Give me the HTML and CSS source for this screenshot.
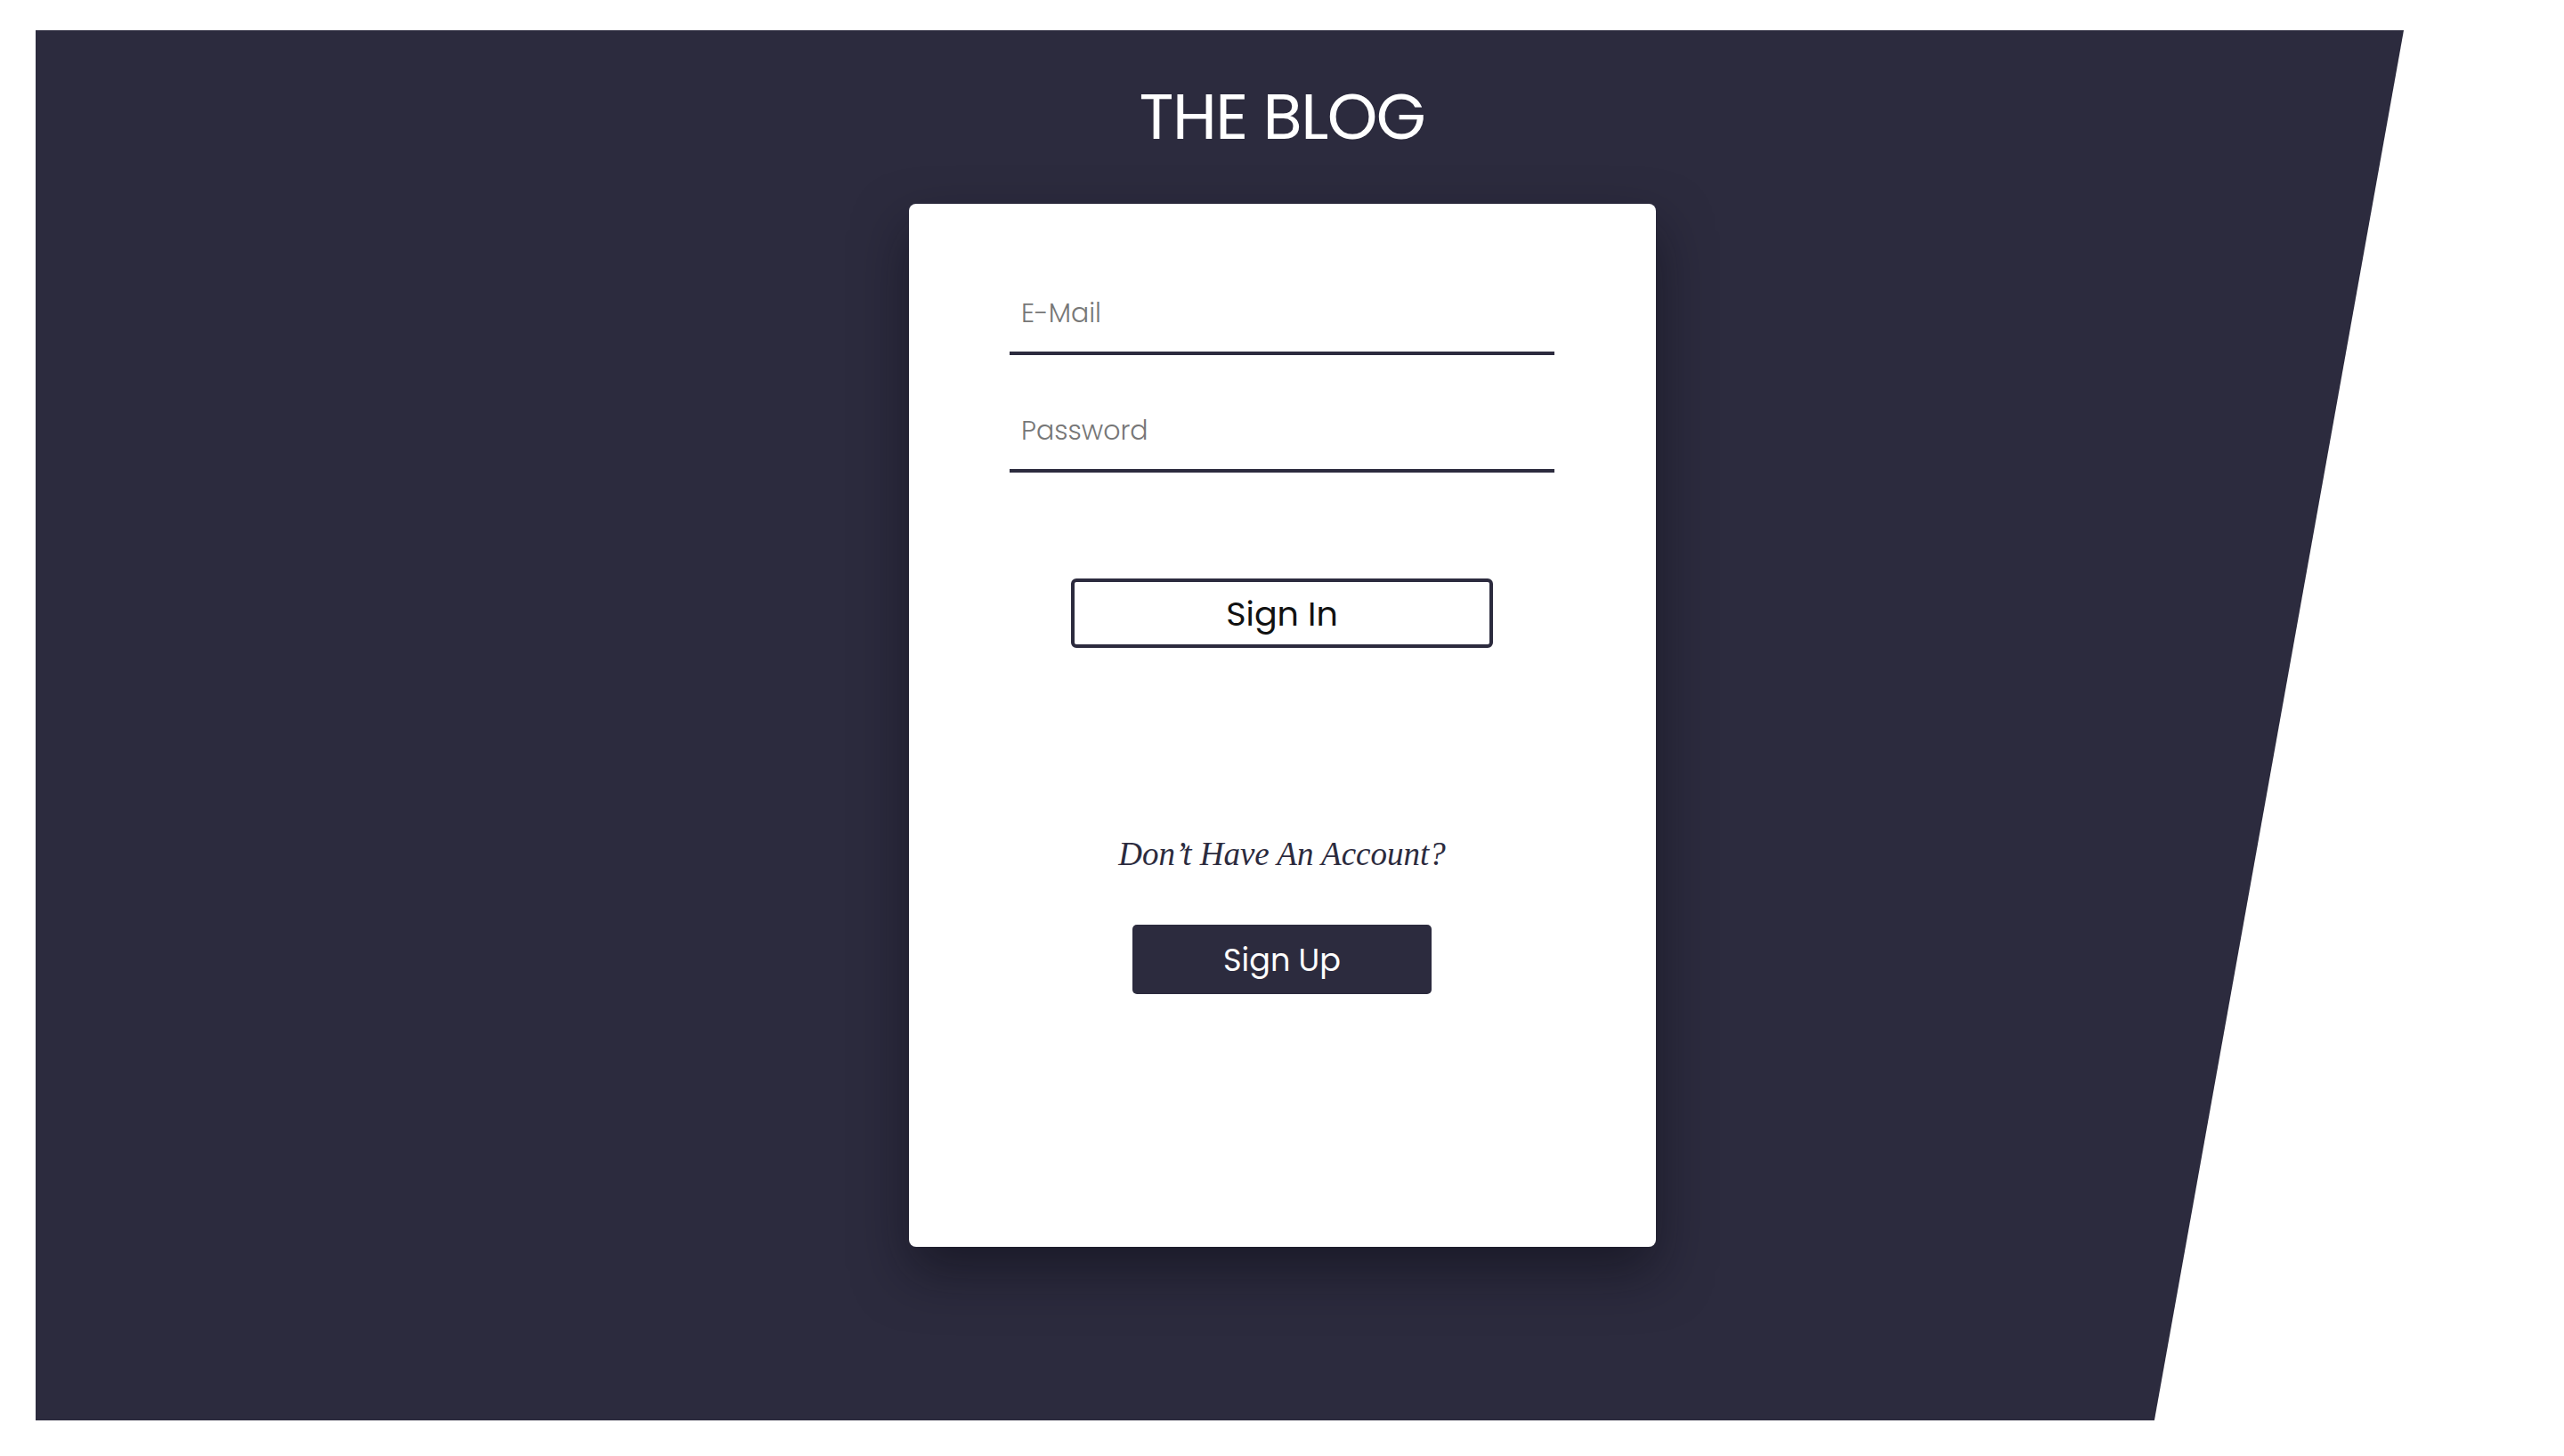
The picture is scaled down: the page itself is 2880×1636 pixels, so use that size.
FILE: index.html
```html
<!DOCTYPE html>
<html lang="en">
<head>
<meta charset="utf-8">
<title>The Blog - Sign In</title>
<link rel="stylesheet" href="styles.css">
</head>
<body>
<div class="page">
  <div class="backdrop"></div>
  <h1 class="brand">THE BLOG</h1>
  <form class="card">
    <input class="field" type="email" placeholder="E-Mail">
    <input class="field field-gap" type="password" placeholder="Password">
    <button class="btn-outline" type="button">Sign In</button>
    <p class="prompt">Don’t Have An Account?</p>
    <button class="btn-solid" type="button">Sign Up</button>
  </form>
</div>
</body>
</html>
```
FILE: styles.css
```css
html, body {
  margin: 0;
  padding: 0;
  background: #ffffff;
}

.page {
  position: relative;
  width: 2880px;
  height: 1636px;
  display: flex;
  flex-direction: column;
  align-items: center;
  padding-top: 95px;
  box-sizing: border-box;
  font-family: "Poppins", Inter, "Noto Sans", sans-serif;
}

.backdrop {
  position: absolute;
  left: 40px;
  top: 34px;
  width: 2660px;
  height: 1562px;
  background: #2c2b3e;
  clip-path: polygon(0 0, 100% 0, 89.47% 100%, 0 100%);
  z-index: 0;
}

.brand {
  position: relative;
  z-index: 1;
  margin: 0;
  font-size: 72px;
  line-height: 1;
  font-weight: 400;
  color: #ffffff;
  letter-spacing: -1.5px;
}

.card {
  position: relative;
  z-index: 1;
  margin-top: 62px;
  width: 839px;
  height: 1172px;
  box-sizing: border-box;
  padding-top: 90px;
  background: #ffffff;
  border-radius: 8px;
  box-shadow: 0 28px 60px rgba(10, 10, 20, 0.5);
  display: flex;
  flex-direction: column;
  align-items: center;
}

.field {
  width: 612px;
  height: 80px;
  box-sizing: border-box;
  border: none;
  border-bottom: 4px solid #2c2b3e;
  padding: 0 13px 10px;
  font-family: "Poppins", Inter, "Noto Sans", sans-serif;
  font-size: 30px;
  color: #333;
  background: transparent;
  outline: none;
}

.field::placeholder {
  color: #777777;
  font-weight: 300;
}

.field-gap {
  margin-top: 52px;
}

.btn-outline {
  margin-top: 119px;
  width: 474px;
  height: 78px;
  box-sizing: border-box;
  border: 4px solid #2c2b3e;
  border-radius: 6px;
  background: #ffffff;
  color: #111111;
  font-family: "Poppins", Inter, "Noto Sans", sans-serif;
  font-size: 38px;
  font-weight: 400;
  padding: 0;
}

.prompt {
  margin: 213px 0 0;
  font-family: "Liberation Serif", "DejaVu Serif", serif;
  font-style: italic;
  font-size: 37px;
  line-height: 1;
  color: #2c2b3e;
}

.btn-solid {
  margin-top: 61px;
  width: 336px;
  height: 78px;
  box-sizing: border-box;
  border: none;
  border-radius: 5px;
  background: #2c2b3e;
  color: #ffffff;
  font-family: "Poppins", Inter, "Noto Sans", sans-serif;
  font-size: 35px;
  font-weight: 400;
  padding: 0;
}
```
